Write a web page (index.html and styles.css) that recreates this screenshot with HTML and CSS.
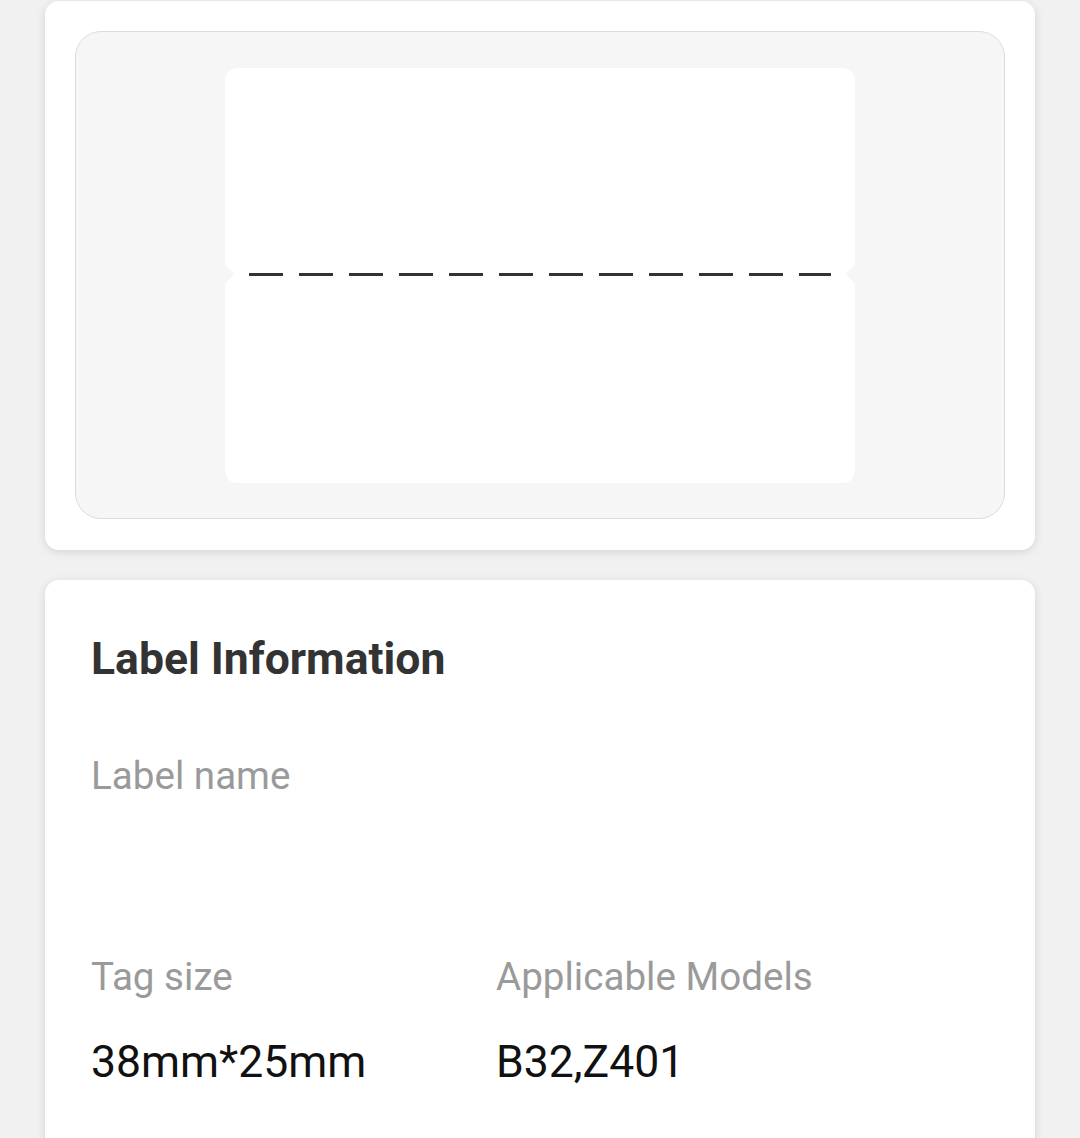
FILE: index.html
```html
<!DOCTYPE html>
<html lang="en">
<head>
  <meta charset="UTF-8" />
  <title>Label Information</title>
  <link rel="stylesheet" href="styles.css">
</head>
<body>
  <div class="card preview-card">
    <div class="preview">
      <svg class="label-shape" width="630" height="415" viewBox="0 0 630 415">
        <path d="M14,0 H616 Q630,0 630,14 V196 L621,206 L630,216 V401 Q630,415 616,415 H14 Q0,415 0,401 V216 L9,206 L0,196 V14 Q0,0 14,0 Z" fill="#ffffff"/>
        <line x1="24" y1="206.5" x2="606" y2="206.5" stroke="#333333" stroke-width="3" stroke-dasharray="34 16"/>
      </svg>
    </div>
  </div>

  <div class="card info-card">
    <h2 class="info-title">Label Information</h2>
    <div class="field">
      <div class="field-label">Label name</div>
      <div class="field-value empty"></div>
    </div>
    <div class="field-row">
      <div class="field">
        <div class="field-label">Tag size</div>
        <div class="field-value">38mm*25mm</div>
      </div>
      <div class="field">
        <div class="field-label">Applicable Models</div>
        <div class="field-value">B32,Z401</div>
      </div>
    </div>
  </div>
</body>
</html>
```

FILE: styles.css
```css
html, body {
  margin: 0;
  padding: 0;
}
body {
  font-family: Roboto, 'Noto Sans', sans-serif;
  background: #f1f1f1;
  padding: 1px 45px 0;
  color: #000;
}
.card {
  background: #fff;
  border-radius: 14px;
  box-shadow: 0 2px 10px rgba(0, 0, 0, 0.12);
}
.preview-card {
  padding: 30px;
  height: 549px;
  box-sizing: border-box;
}
.preview {
  height: 488px;
  background: #f6f6f6;
  border: 1px solid #dcdcdc;
  border-radius: 26px;
  box-sizing: border-box;
  display: flex;
  align-items: center;
  justify-content: center;
}
.label-shape {
  display: block;
}
.info-card {
  margin-top: 30px;
  padding: 51px 46px 40px;
  min-height: 600px;
  box-sizing: border-box;
}
.info-title {
  margin: 0;
  font-size: 44.5px;
  font-weight: 700;
  line-height: 56px;
  color: #333;
}
.field-label {
  font-size: 38.6px;
  line-height: 48px;
  color: #9a9a9a;
}
.field-value {
  font-size: 44.5px;
  line-height: 56px;
  color: #111;
  margin-top: 33px;
}
.field-value.empty {
  height: 56px;
}
.info-card > .field {
  margin-top: 65px;
}
.field-row {
  display: grid;
  grid-template-columns: 405px 1fr;
  margin-top: 64px;
}
```
